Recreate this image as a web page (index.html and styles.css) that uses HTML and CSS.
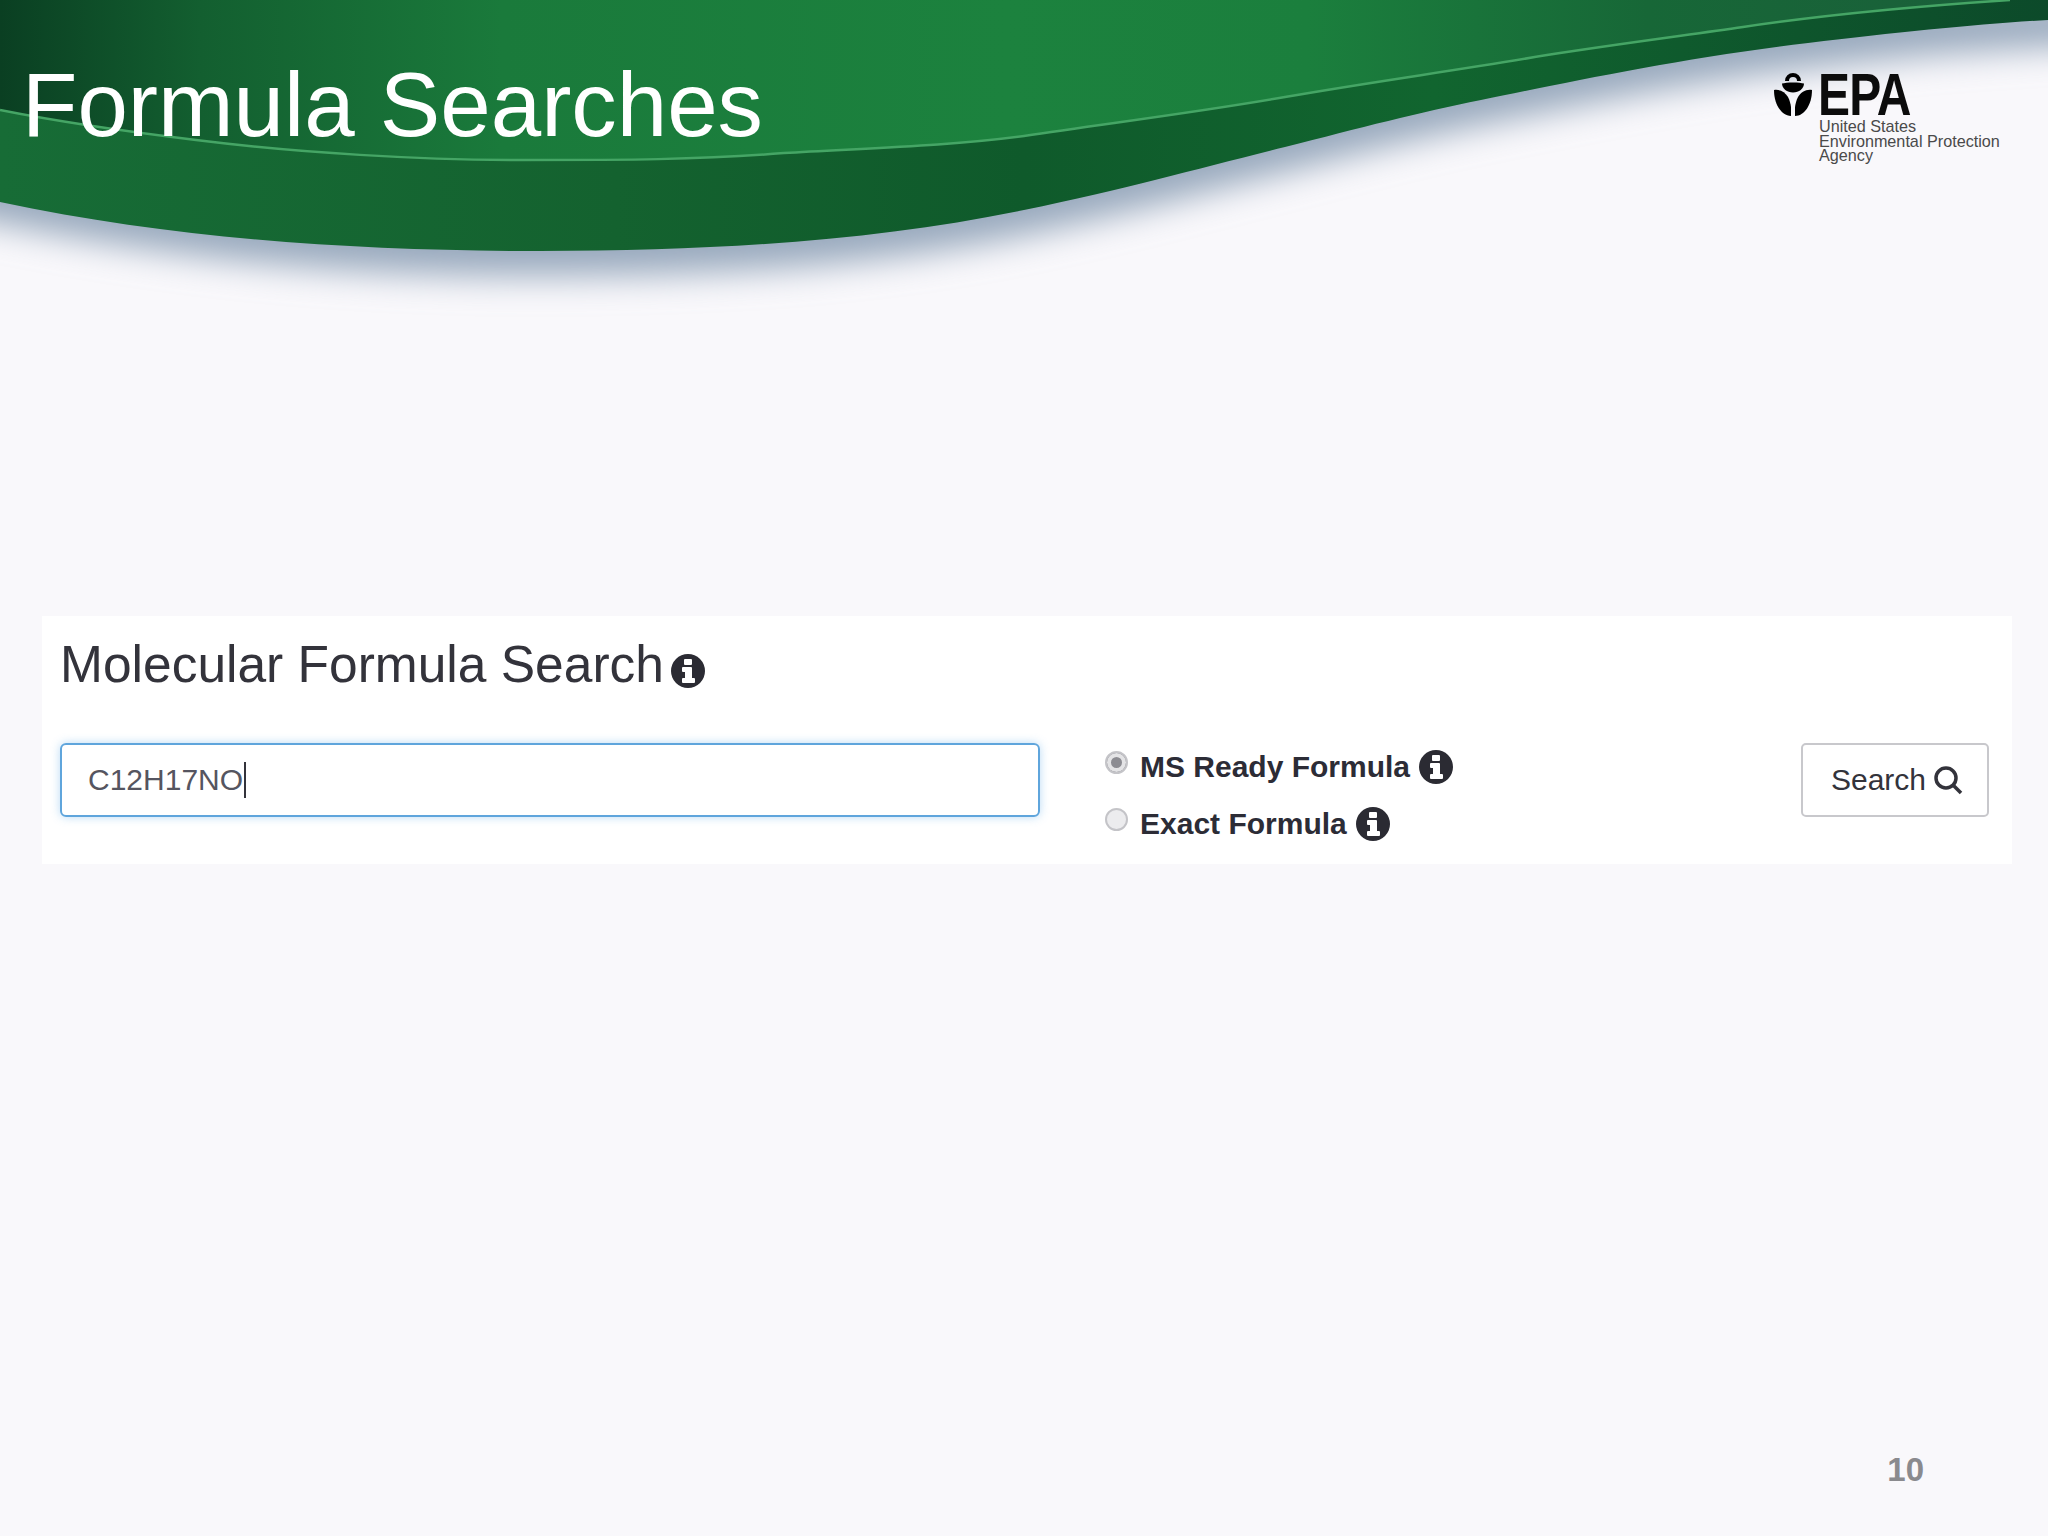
FILE: index.html
```html
<!DOCTYPE html>
<html lang="en">
<head>
  <meta charset="UTF-8">
  <meta name="viewport" content="width=device-width, initial-scale=1.0">
  <title>Formula Searches</title>
  <link rel="stylesheet" href="styles.css">
</head>
<body>

<svg width="0" height="0" class="defs">
  <symbol id="info" viewBox="0 0 34 34">
    <path fill-rule="evenodd" d="M17 0a17 17 0 1 0 0 34a17 17 0 1 0 0-34zM14 5h6a1 1 0 0 1 1 1v4a1 1 0 0 1-1 1h-6a1 1 0 0 1-1-1V6a1 1 0 0 1 1-1zM12 13h8a1 1 0 0 1 1 1v10h2a1 1 0 0 1 1 1v3a1 1 0 0 1-1 1H12a1 1 0 0 1-1-1v-3a1 1 0 0 1 1-1h2v-6h-2a1 1 0 0 1-1-1v-3a1 1 0 0 1 1-1z"/>
  </symbol>
</svg>

<div class="slide">

  <!-- Green wave behind the title -->
  <svg class="wave" viewBox="0 0 2048 340" width="2048" height="340">
    <defs>
      <linearGradient id="waveTop" x1="0" y1="0" x2="1" y2="0">
        <stop offset="0" stop-color="#0a3f22"/>
        <stop offset="0.1" stop-color="#135f30"/>
        <stop offset="0.25" stop-color="#1a7a3b"/>
        <stop offset="0.5" stop-color="#1c823e"/>
        <stop offset="0.65" stop-color="#1b7f3d"/>
        <stop offset="0.82" stop-color="#176737"/>
        <stop offset="1" stop-color="#1a5f3a"/>
      </linearGradient>
      <linearGradient id="waveBand" x1="0" y1="0" x2="1" y2="0">
        <stop offset="0" stop-color="#176c36"/>
        <stop offset="0.3" stop-color="#14622f"/>
        <stop offset="0.5" stop-color="#0f5a2b"/>
        <stop offset="0.7" stop-color="#11652f"/>
        <stop offset="1" stop-color="#0c4a2a"/>
      </linearGradient>
      <filter id="waveBlur" x="-5%" y="-20%" width="110%" height="160%">
        <feGaussianBlur stdDeviation="17"/>
      </filter>
    </defs>
    <path class="wave-shadow" filter="url(#waveBlur)" d="M-40 215 C180 262 360 276 540 276 C720 276 880 265 1024 235 C1130 213 1200 193 1285 172 C1360 153 1420 137 1481 125 C1560 109 1680 83 1808 68 C1900 57 1980 49 2090 45 V0 H-40 Z"/>
    <path fill="url(#waveBand)" d="M0 202 C180 240 360 251 540 251 C720 251 880 240 1024 210 C1130 188 1200 168 1285 147 C1360 128 1420 112 1481 100 C1560 84 1680 58 1808 43 C1900 32 1980 24 2048 20 V0 H0 Z"/>
    <path fill="url(#waveTop)" d="M0 110 C70 124 130 132 196 140 C300 153 420 160 522 160 C620 160 700 160 784 153 C870 148 950 146 1024 136 C1110 123 1200 112 1285 97 C1370 82 1460 70 1547 55 C1610 45 1680 36 1743 27 C1830 14 1920 6 2010 0 H0 Z"/>
    <path class="wave-line" d="M0 110 C70 124 130 132 196 140 C300 153 420 160 522 160 C620 160 700 160 784 153 C870 148 950 146 1024 136 C1110 123 1200 112 1285 97 C1370 82 1460 70 1547 55 C1610 45 1680 36 1743 27 C1830 14 1920 6 2010 0"/>
  </svg>

  <header class="slide-head">
    <h1 class="slide-title">Formula Searches</h1>
    <div class="epa-logo">
      <div class="epa-mark">
        <svg class="epa-flower" viewBox="0 0 38 43" width="38" height="43">
          <path d="M19 0a8 8 0 0 1 8 8h-4a4 4 0 0 0-8 0h-4a8 8 0 0 1 8-8z"/>
          <path d="M8 10.500c4-1.500 18-1.500 22 0c0 5-5 9-11 9s-11-4-11-9z"/>
          <path d="M0 17c6-1 11 2 14 7c1.500 3 2.500 6 3 10v9C8 43 0 32 0 17z"/>
          <path d="M38 17c-6-1-11 2-14 7c-1.500 3-2.500 6-3 10v9c9 0 17-11 17-26z"/>
        </svg>
        <span class="epa-word">EPA</span>
      </div>
      <div class="epa-name">United States<br>Environmental Protection<br>Agency</div>
    </div>
  </header>

  <section class="search-panel">
    <h2 class="panel-title">Molecular Formula Search <svg class="icon-info icon-lg"><use href="#info"/></svg></h2>
    <div class="search-row">
      <div class="formula-input"><span class="formula-text">C12H17NO</span></div>
      <div class="formula-options">
        <label class="option">
          <input type="radio" name="kind" checked>
          <span>MS Ready Formula</span>
          <svg class="icon-info"><use href="#info"/></svg>
        </label>
        <label class="option">
          <input type="radio" name="kind">
          <span>Exact Formula</span>
          <svg class="icon-info"><use href="#info"/></svg>
        </label>
      </div>
      <button class="search-btn">Search
        <svg class="icon-search" viewBox="0 0 30 30" width="30" height="30">
          <circle cx="13" cy="13" r="10"/>
          <path d="M20 20l8 8"/>
        </svg>
      </button>
    </div>
  </section>

  <footer class="page-num">10</footer>
</div>

</body>
</html>
```

FILE: styles.css
```css
body {
  margin: 0;
  background-color: #f9f8fb;
  font-family: "Liberation Sans", Arial, sans-serif;
}

.defs {
  position: absolute;
}

.slide {
  position: relative;
  width: 2048px;
  height: 1536px;
  display: flex;
  flex-direction: column;
  overflow: hidden;
}

/* Wave */
.wave {
  position: absolute;
  top: 0;
  left: 0;
}
.wave-shadow {
  fill: #98a9bd;
}
.wave-line {
  fill: none;
  stroke: #45a565;
  stroke-width: 2.500;
}

/* Header */
.slide-head {
  position: relative;
  height: 616px;
  box-sizing: border-box;
  padding: 55px 16px 0 22px;
  display: flex;
  justify-content: space-between;
  align-items: flex-start;
}
.slide-title {
  margin: 0;
  color: white;
  font-size: 90.700px;
  font-weight: normal;
  line-height: 100px;
}

/* Logo */
.epa-logo {
  margin-top: 18px;
  width: 258px;
}
.epa-mark {
  display: flex;
  align-items: center;
  gap: 6px;
  height: 43px;
}
.epa-word {
  display: inline-block;
  font-size: 60px;
  font-weight: bold;
  line-height: 43px;
  letter-spacing: -1px;
  color: #0c0c0c;
  transform: scaleX(0.8);
  transform-origin: left center;
}
.epa-name {
  margin: 3px 0 0 45px;
  font-size: 16.200px;
  line-height: 14.500px;
  color: #4a4a4a;
  white-space: nowrap;
}

/* Search panel */
.search-panel {
  position: relative;
  width: 1970px;
  height: 248px;
  margin-left: 42px;
  box-sizing: border-box;
  padding: 20px 24px 0 18px;
  background-color: white;
}
.panel-title {
  margin: 0;
  color: #33333b;
  font-size: 51.500px;
  font-weight: normal;
  line-height: 56px;
}
.icon-info {
  width: 34px;
  height: 34px;
  fill: #2b2b33;
  vertical-align: -6px;
}
.icon-lg {
  margin-left: -7px;
  vertical-align: -6px;
}
.search-row {
  display: flex;
  margin-top: 51px;
}
.formula-input {
  width: 980px;
  height: 74px;
  box-sizing: border-box;
  padding-left: 26px;
  border: 2px solid #5fa5dc;
  border-radius: 6px;
  box-shadow: 0 0 10px rgba(102, 175, 233, 0.45);
  display: flex;
  align-items: center;
}
.formula-text {
  padding-right: 1px;
  border-right: 2px solid #33333b;
  color: #555560;
  font-size: 30px;
  line-height: 36px;
}
.formula-options {
  display: flex;
  flex-direction: column;
  gap: 20px;
  margin: 5px 0 0 65px;
}
.option {
  display: flex;
  align-items: center;
  gap: 9px;
  height: 37px;
  color: #2c2c36;
  font-size: 30px;
  font-weight: bold;
}
.option span {
  margin-left: 3px;
}
.option input {
  appearance: none;
  width: 23px;
  height: 23px;
  margin: -8px 0 0 0;
  border: 2px solid #c4c4c8;
  border-radius: 50%;
  background-color: #ececee;
}
.option input:checked {
  background-color: #8c8c92;
  box-shadow: inset 0 0 0 4px #e4e4e6;
}
.search-btn {
  width: 188px;
  height: 74px;
  margin: 0 -1px 0 auto;
  padding: 0 0 0 4px;
  border: 2px solid #c8c8cc;
  border-radius: 5px;
  background-color: white;
  color: #33333b;
  font-family: inherit;
  font-size: 30px;
  display: flex;
  align-items: center;
  justify-content: center;
  gap: 7px;
}
.icon-search {
  fill: none;
  stroke: #33333b;
  stroke-width: 3.500;
}

/* Page number */
.page-num {
  position: absolute;
  top: 1451px;
  right: 124px;
  color: #8a8a8e;
  font-size: 33px;
  font-weight: bold;
  line-height: 38px;
}
```
